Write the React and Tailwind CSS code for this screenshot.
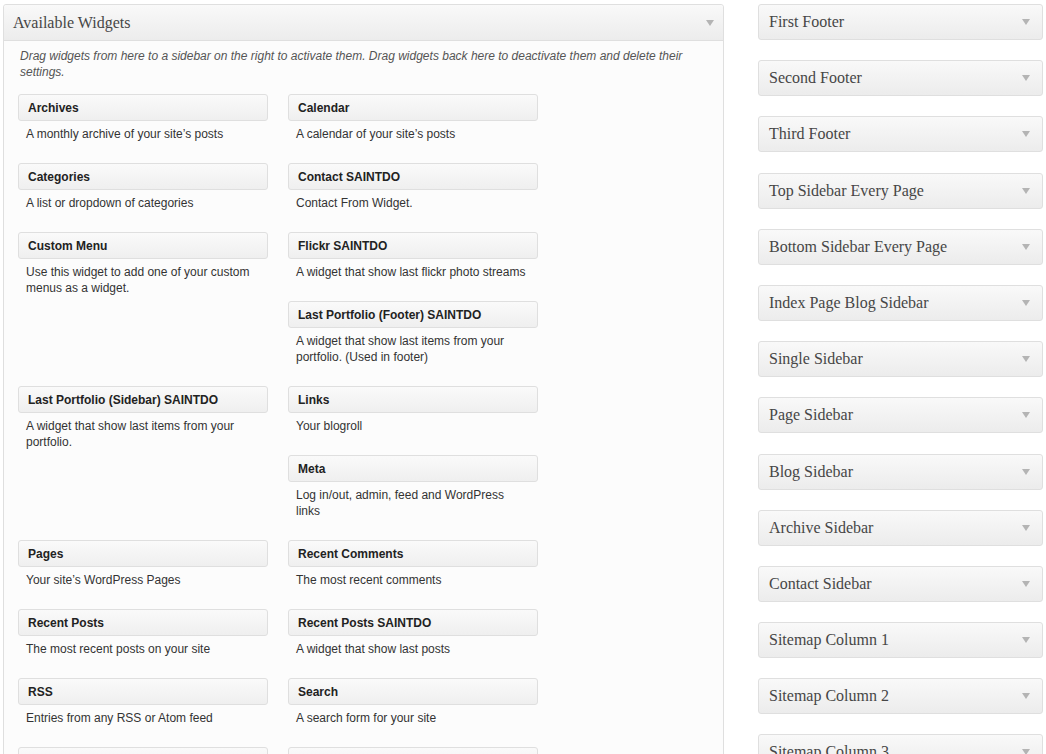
import React from "react";

const rows = [
  [
    [{ title: "Archives", desc: "A monthly archive of your site’s posts" }],
    [{ title: "Calendar", desc: "A calendar of your site’s posts" }],
  ],
  [
    [{ title: "Categories", desc: "A list or dropdown of categories" }],
    [{ title: "Contact SAINTDO", desc: "Contact From Widget." }],
  ],
  [
    [{ title: "Custom Menu", desc: "Use this widget to add one of your custom menus as a widget." }],
    [
      { title: "Flickr SAINTDO", desc: "A widget that show last flickr photo streams" },
      { title: "Last Portfolio (Footer) SAINTDO", desc: "A widget that show last items from your portfolio. (Used in footer)" },
    ],
  ],
  [
    [{ title: "Last Portfolio (Sidebar) SAINTDO", desc: "A widget that show last items from your portfolio." }],
    [
      { title: "Links", desc: "Your blogroll" },
      { title: "Meta", desc: "Log in/out, admin, feed and WordPress links" },
    ],
  ],
  [
    [{ title: "Pages", desc: "Your site’s WordPress Pages" }],
    [{ title: "Recent Comments", desc: "The most recent comments" }],
  ],
  [
    [{ title: "Recent Posts", desc: "The most recent posts on your site" }],
    [{ title: "Recent Posts SAINTDO", desc: "A widget that show last posts" }],
  ],
  [
    [{ title: "RSS", desc: "Entries from any RSS or Atom feed" }],
    [{ title: "Search", desc: "A search form for your site" }],
  ],
  [
    [{ title: "Tag Cloud", desc: "Your most used tags in cloud format" }],
    [{ title: "Text", desc: "Arbitrary text or HTML" }],
  ],
];

const sidebars = [
  "First Footer",
  "Second Footer",
  "Third Footer",
  "Top Sidebar Every Page",
  "Bottom Sidebar Every Page",
  "Index Page Blog Sidebar",
  "Single Sidebar",
  "Page Sidebar",
  "Blog Sidebar",
  "Archive Sidebar",
  "Contact Sidebar",
  "Sitemap Column 1",
  "Sitemap Column 2",
  "Sitemap Column 3",
];

function Arrow() {
  return (
    <svg width="8" height="6" viewBox="0 0 8 6" className="shrink-0">
      <polygon points="0,0 8,0 4,6" fill="#b4b4b4" />
    </svg>
  );
}

function Widget({ title, desc }) {
  return (
    <div className="w-[250px] mb-[21px]">
      <div className="h-[27px] flex items-center px-[9px] border border-[#dfdfdf] rounded-[3px] bg-gradient-to-b from-[#fafafa] to-[#efefef] text-[12px] font-bold text-[#222]">
        {title}
      </div>
      <div className="mt-[5px] px-[8px] text-[12px] leading-[16px] text-[#333]">{desc}</div>
    </div>
  );
}

export default function App() {
  return (
    <div
      className="w-[1046px] h-[754px] overflow-hidden bg-white flex items-start"
      style={{ fontFamily: '"Liberation Sans", Arial, sans-serif' }}
    >
      {/* available widgets panel */}
      <div className="ml-[3px] mt-[4px] w-[721px] border border-[#dfdfdf] rounded-[3px] bg-[#fcfcfc]">
        <div className="h-[36px] flex items-center justify-between pl-[9px] pr-[9px] border-b border-[#dfdfdf] bg-gradient-to-b from-[#f9f9f9] to-[#ececec] rounded-t-[3px]">
          <span className="text-[16px] text-[#464646]" style={{ fontFamily: '"Liberation Serif", Georgia, serif' }}>
            Available Widgets
          </span>
          <Arrow />
        </div>
        <div className="pl-[16px] pr-[30px] pt-[7px] text-[12px] leading-[16px] italic text-[#555]">
          Drag widgets from here to a sidebar on the right to activate them. Drag widgets back here to deactivate them and delete their settings.
        </div>
        <div className="pl-[14px] pt-[14px] flex flex-col">
          {rows.map((row, i) => (
            <div key={i} className="flex gap-[20px]">
              {row.map((cell, j) => (
                <div key={j} className="flex flex-col">
                  {cell.map((w) => (
                    <Widget key={w.title} {...w} />
                  ))}
                </div>
              ))}
            </div>
          ))}
        </div>
      </div>

      {/* sidebars */}
      <div className="ml-[34px] mt-[4px] w-[285px] flex flex-col gap-[20.2px]">
        {sidebars.map((s) => (
          <div
            key={s}
            className="h-[36px] shrink-0 flex items-center justify-between pl-[10px] pr-[12px] border border-[#dfdfdf] rounded-[3px] bg-gradient-to-b from-[#f9f9f9] to-[#ececec]"
          >
            <span className="text-[16px] text-[#464646]" style={{ fontFamily: '"Liberation Serif", Georgia, serif' }}>
              {s}
            </span>
            <Arrow />
          </div>
        ))}
      </div>
    </div>
  );
}
